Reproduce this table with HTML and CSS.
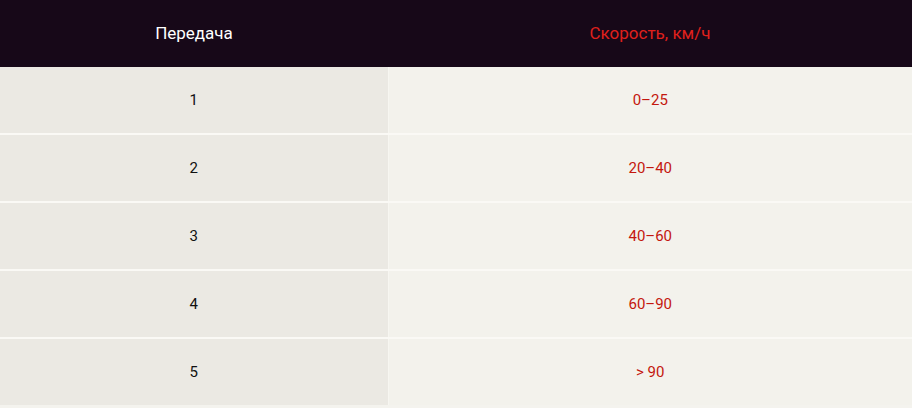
FILE: index.html
```html
<!DOCTYPE html>
<html lang="ru">
<head>
<meta charset="utf-8">
<link rel="stylesheet" href="styles.css">
</head>
<body>
<table class="gears">
  <thead>
    <tr><th class="col-gear">Передача</th><th class="col-speed">Скорость, км/ч</th></tr>
  </thead>
  <tbody>
    <tr><td class="col-gear">1</td><td class="col-speed">0–25</td></tr>
    <tr><td class="col-gear">2</td><td class="col-speed">20–40</td></tr>
    <tr><td class="col-gear">3</td><td class="col-speed">40–60</td></tr>
    <tr><td class="col-gear">4</td><td class="col-speed">60–90</td></tr>
    <tr><td class="col-gear">5</td><td class="col-speed">&gt; 90</td></tr>
  </tbody>
</table>
</body>
</html>
```
FILE: styles.css
```css
html, body {
  margin: 0;
  padding: 0;
  background: #f4f3ee;
}
body {
  font-family: Roboto, "Liberation Sans", sans-serif;
}
.gears {
  width: 912px;
  border-collapse: collapse;
  table-layout: fixed;
}
.gears th {
  height: 65px;
  padding: 0 0 2px;
  background: #170818;
  font-weight: 400;
  font-size: 17px;
  text-align: center;
  vertical-align: middle;
}
.gears th.col-gear {
  width: 388px;
  color: #ffffff;
}
.gears th.col-speed {
  color: #e0201c;
}
.gears td {
  height: 66px;
  padding: 0;
  text-align: center;
  vertical-align: middle;
  font-size: 15px;
  border-top: 2px solid #faf9f5;
}
.gears tbody tr:first-child td {
  border-top: 0;
}
.gears td.col-gear {
  background: #ebe9e3;
  color: #111111;
  border-right: 1px solid #f7f6f1;
}
.gears td.col-speed {
  background: #f3f2ec;
  color: #c4170e;
}
```
